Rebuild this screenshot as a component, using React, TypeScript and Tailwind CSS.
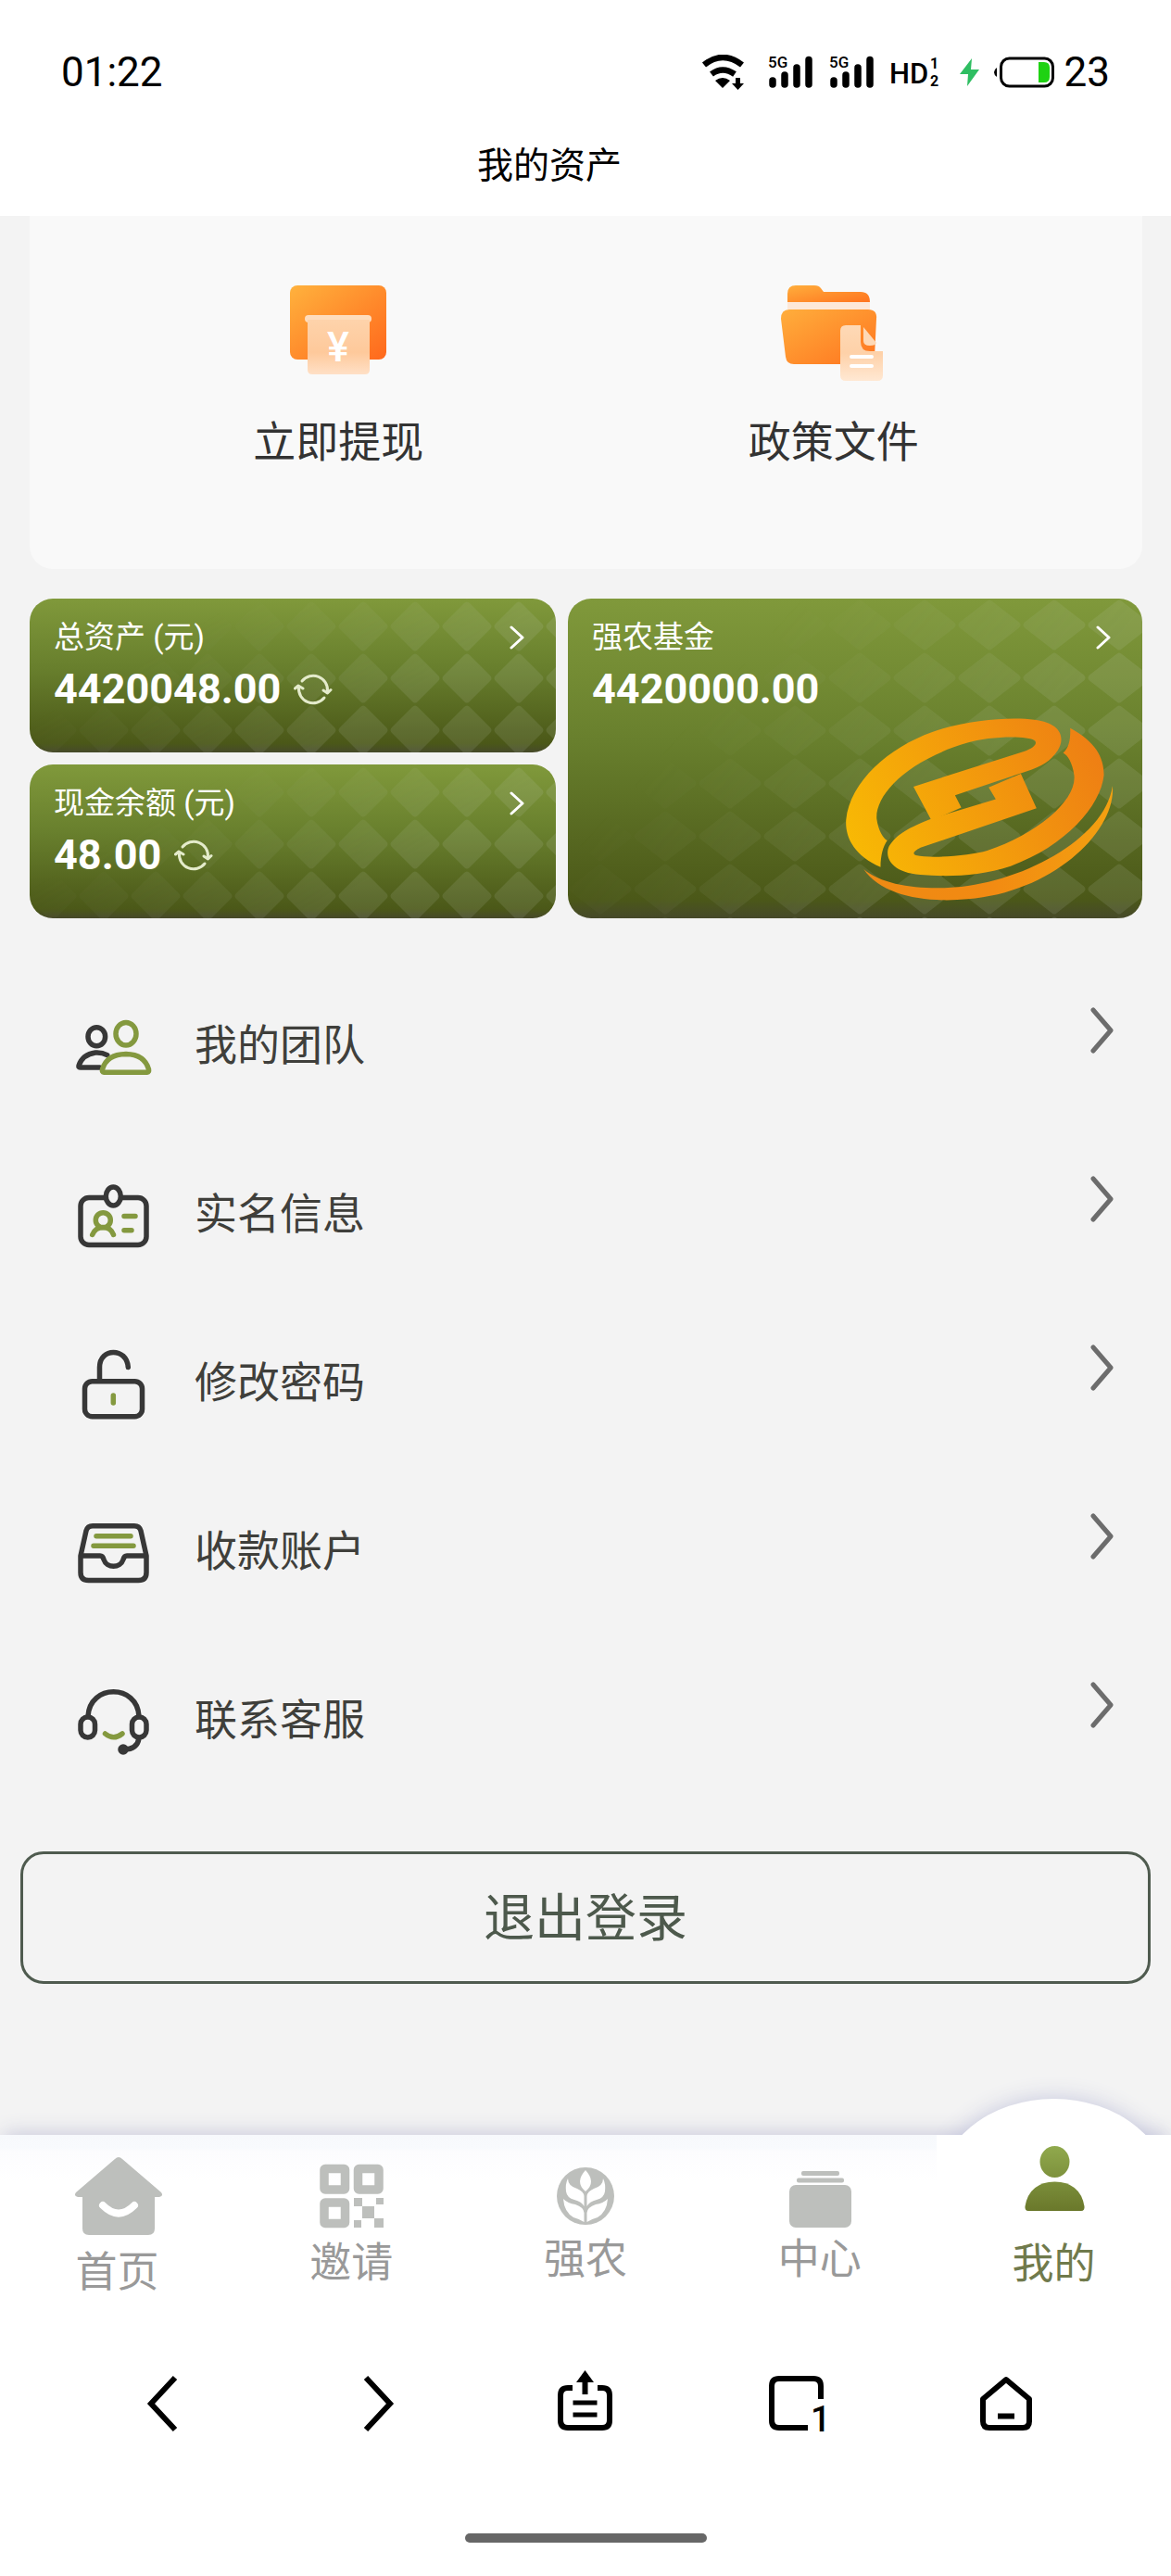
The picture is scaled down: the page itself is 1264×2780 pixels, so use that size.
import type { ReactNode } from "react";

const INK = "#373737";
const LEAF = "#84993f";
const MUTED = "#bdbfbc";

function SignalIcon() {
  return (
    <svg className="overflow-visible" width="47" height="36" viewBox="0 0 47 36">
      <text x="-1" y="13" fontSize="17" fontWeight="500">5G</text>
      <g stroke="#000" strokeWidth="7.500" strokeLinecap="round">
        <path d="M4 27v4M17 21v10M30 13v18M43 4.500v26.500" />
      </g>
    </svg>
  );
}

function StatusBar() {
  return (
    <div className="flex h-14 items-center justify-between px-[66px]">
      <span className="text-[44px] leading-[56px]">01:22</span>
      <div className="flex items-center">
        <svg width="47" height="38" viewBox="0 0 47 38">
          <path d="M3 11Q23 -5 44 11M11 21Q23 12 36 21" fill="none" stroke="#000" strokeWidth="6.500" />
          <path d="M15 28Q23 22 31 28L23 36Z" />
          <path d="M37 25h5v6h4l-6.500 7l-6.500 -7h4z" />
        </svg>
        <div className="ml-[26px]"><SignalIcon /></div>
        <div className="ml-[19px]"><SignalIcon /></div>
        <svg className="ml-[19px] overflow-visible" width="52" height="36" viewBox="0 0 52 36">
          <text x="-2" y="30" fontSize="31" fontWeight="500">HD</text>
          <text x="42" y="14" fontSize="16" fontWeight="700">1</text>
          <text x="42" y="33" fontSize="16" fontWeight="700">2</text>
        </svg>
        <svg className="ml-[22px]" width="21" height="30" viewBox="0 0 21 30">
          <path d="M13 0L0 17h9L8 30L21 12h-9z" fill="#2fbe62" />
        </svg>
        <svg className="ml-4" width="65" height="34" viewBox="0 0 65 34">
          <path d="M3 12v10Q0 20 0 17T3 12Z" />
          <rect x="7.500" y="2" width="56" height="30" rx="9" fill="none" stroke="#000" strokeWidth="3" />
          <path d="M48 6h6q6 0 6 6v10q0 6 -6 6h-6z" fill="#1fd212" />
        </svg>
        <span className="ml-[11px] text-[44px] leading-[56px]">23</span>
      </div>
    </div>
  );
}

function WithdrawIcon() {
  return (
    <svg width="128" height="112" viewBox="0 0 128 112">
      <defs>
        <linearGradient id="wd-box" x1="0" y1="0" x2="1" y2="1">
          <stop offset="0" stopColor="#ffb23d" />
          <stop offset="1" stopColor="#ff681c" />
        </linearGradient>
        <linearGradient id="wd-paper" x1="0" y1="0" x2="0" y2="1">
          <stop offset="0" stopColor="#fed3ab" />
          <stop offset="0.6" stopColor="#fec99b" />
          <stop offset="1" stopColor="#ffe0c6" />
        </linearGradient>
      </defs>
      <rect x="12" y="7" width="104" height="80" rx="8" fill="url(#wd-box)" />
      <rect x="28" y="39" width="72" height="8" rx="4" fill="#fedcbc" />
      <path d="M31 44h67v54q0 5 -5 5h-57q-5 0 -5 -5z" fill="url(#wd-paper)" />
      <text x="64" y="89" textAnchor="middle" fontSize="45" fontWeight="500" fill="#fff">¥</text>
    </svg>
  );
}

function PolicyIcon() {
  return (
    <svg width="128" height="112" viewBox="0 0 128 112">
      <defs>
        <linearGradient id="pl-box" x1="0" y1="0" x2="1" y2="1">
          <stop offset="0" stopColor="#ffae3c" />
          <stop offset="1" stopColor="#ff741f" />
        </linearGradient>
        <linearGradient id="pl-doc" x1="0" y1="0" x2="0" y2="1">
          <stop offset="0" stopColor="#fed9b6" />
          <stop offset="0.500" stopColor="#fed1a8" />
          <stop offset="1" stopColor="#ffe8d3" />
        </linearGradient>
      </defs>
      <path d="M14 25V16Q14 7 23 7H43Q48 7 50 10L53 14H93Q103 14 103 25Z" fill="url(#pl-box)" />
      <rect x="14" y="25" width="89" height="8" fill="#fde8d8" />
      <path d="M16 33H101Q111 33 110 43L108 84Q107 92 99 92H21Q13 92 12 84L7 43Q7 33 16 33Z" fill="url(#pl-box)" />
      <path d="M77 50H93V68Q93 78 103 78H117V104Q117 110 111 110H77Q71 110 71 104V56Q71 50 77 50Z" fill="url(#pl-doc)" />
      <path d="M96 52L110 69Q109 72 103 72Q96 72 96 67Z" fill="#fed9b6" />
      <path d="M83 84H105M83 94H105" stroke="#fff" strokeWidth="4" strokeLinecap="round" />
    </svg>
  );
}

function Action({ label, children }: { label: string; children: ReactNode }) {
  return (
    <a href="#" className="flex flex-col items-center gap-8">
      {children}
      <span className="text-[46px] leading-[64px] text-[#333]">{label}</span>
    </a>
  );
}

function Diamonds({ id, w, h, x, y }: { id: string; w: number; h: number; x: number; y: number }) {
  const d = `M${w / 2 - 3} 3Q${w / 2} 0 ${w / 2 + 3} 3L${w - 3} ${h / 2 - 3}Q${w} ${h / 2} ${w - 3} ${h / 2 + 3}L${w / 2 + 3} ${h - 3}Q${w / 2} ${h} ${w / 2 - 3} ${h - 3}L3 ${h / 2 + 3}Q0 ${h / 2} 3 ${h / 2 - 3}Z`;
  return (
    <svg className="absolute inset-0 h-full w-full" aria-hidden="true">
      <defs>
        <pattern id={`${id}-p`} x={x} y={y} width={w} height={h} patternUnits="userSpaceOnUse">
          <path d={d} fill="#c9cfc0" fillOpacity="0.13" />
        </pattern>
        <linearGradient id={`${id}-g`} x1="0.2" y1="0.4" x2="0.7" y2="0.65">
          <stop offset="0" stopColor="#000" />
          <stop offset="1" stopColor="#fff" />
        </linearGradient>
        <mask id={`${id}-m`} maskContentUnits="objectBoundingBox">
          <rect width="1" height="1" fill={`url(#${id}-g)`} />
        </mask>
      </defs>
      <rect width="100%" height="100%" fill={`url(#${id}-p)`} mask={`url(#${id}-m)`} />
    </svg>
  );
}

function RefreshIcon() {
  return (
    <svg width="42" height="36" viewBox="0 0 42 36" fill="none" stroke="#e4ebcb" strokeWidth="3" strokeLinecap="round" strokeLinejoin="round">
      <path d="M9 9A15.500 15.500 0 0 1 36.500 20" />
      <path d="M33 27A15.500 15.500 0 0 1 5.500 16" />
      <path d="M32 19L36.500 22L40 18.500" />
      <path d="M1.500 17L5 14L10 17" />
    </svg>
  );
}

function FundLogo() {
  return (
    <svg className="absolute right-[30px] bottom-[19px]" width="291" height="197" viewBox="737 435 688 592" preserveAspectRatio="none" aria-hidden="true">
      <defs>
        <linearGradient id="fund-gold" gradientUnits="userSpaceOnUse" x1="740" y1="820" x2="1400" y2="560">
          <stop offset="0" stopColor="#f8b904" />
          <stop offset="1" stopColor="#ee7e14" />
        </linearGradient>
        <linearGradient id="fund-edge" gradientUnits="userSpaceOnUse" x1="785" y1="0" x2="1420" y2="0">
          <stop offset="0" stopColor="#ee8a14" />
          <stop offset="0.5" stopColor="#f28a12" />
          <stop offset="1" stopColor="#f3a010" />
        </linearGradient>
      </defs>
      <g fill="url(#fund-gold)">
        <path d="M828 918C760 880 737 820 740 765C750 640 850 530 960 480C1050 440 1160 430 1220 440C1290 450 1300 500 1280 540C1262 575 1240 590 1200 608L1018 685L1034 725L958 767L912 657L1190 545C1225 530 1227 515 1222 508C1200 490 1100 495 1050 515C900 570 815 680 818 760C822 800 835 825 845 832C835 850 828 880 828 918Z" />
        <path d="M1312 467C1375 510 1398 560 1398 620C1390 720 1300 850 1160 915C1080 948 1000 950 930 943C850 935 838 880 850 850C870 810 900 790 960 760L1122 698L1104 660L1186 615L1226 727L930 855C910 868 910 875 918 880C960 892 1060 880 1100 865C1230 810 1330 700 1322 620C1318 580 1305 555 1294 548C1310 530 1313 500 1312 467Z" />
      </g>
      <path d="M785 925C830 975 920 990 1000 985C1180 975 1400 830 1420 655C1430 800 1270 1000 1050 1022C940 1035 830 1010 785 925Z" fill="url(#fund-edge)" />
    </svg>
  );
}

const CARD_BG = "bg-[linear-gradient(to_bottom,#80993b_0%,#687f2d_45%,#4b5818_94%,#46492a_100%)]";

type AssetCardProps = {
  label: string;
  amount: string;
  pattern: ReactNode;
  refresh?: boolean;
  className?: string;
  children?: ReactNode;
};

function AssetCard({ label, amount, pattern, refresh, className = "", children }: AssetCardProps) {
  return (
    <section className={`relative overflow-hidden rounded-[25px] pt-[18px] pr-[34px] pb-11 pl-[26px] text-white ${CARD_BG} ${className}`}>
      {pattern}
      <div className="relative flex items-center justify-between">
        <h2 className="text-[33px] leading-[48px]">{label}</h2>
        <a href="#" aria-label={label}>
          <svg width="16" height="26" viewBox="0 0 16 26" fill="none" stroke="#fff" strokeWidth="3" strokeLinecap="round" strokeLinejoin="round">
            <path d="M2 2L14 13L2 24" />
          </svg>
        </a>
      </div>
      <div className="relative mt-2 flex items-center gap-[14px]">
        <span className="text-[45px] leading-[48px] font-bold">{amount}</span>
        {refresh && (
          <button type="button" aria-label="刷新">
            <RefreshIcon />
          </button>
        )}
      </div>
      {children}
    </section>
  );
}

const MENU: { label: string; icon: ReactNode }[] = [
  {
    label: "我的团队",
    icon: (
      <>
        <g stroke={INK}>
          <ellipse cx="22.300" cy="27.700" rx="9.300" ry="10" />
          <path d="M33.700 47.700Q28 44.500 21 45Q7 47 3 59Q2.500 61 5 61H25.700" />
        </g>
        <g stroke={LEAF}>
          <ellipse cx="54" cy="24.700" rx="11" ry="12.300" />
          <path d="M30 66.300Q28 66.300 28.500 63Q33 47 54 46.500Q74 47 78.500 63Q79 66.300 77 66.300Z" />
        </g>
      </>
    ),
  },
  {
    label: "实名信息",
    icon: (
      <>
        <g stroke={INK}>
          <rect x="5" y="19.500" width="71" height="51" rx="9" />
          <ellipse cx="40.300" cy="18" rx="8" ry="10" fill="#f3f3f3" />
        </g>
        <g stroke={LEAF}>
          <circle cx="29.300" cy="43.700" r="8" />
          <path d="M17.700 59.500Q21 51.500 29.300 51.500T40.500 59.500M52 39.500H64M52 54.700H60" />
        </g>
      </>
    ),
  },
  {
    label: "修改密码",
    icon: (
      <>
        <g stroke={INK}>
          <rect x="9.500" y="35.700" width="62" height="38" rx="8" />
          <path d="M25.500 35V20.500C25.500 -1 55 -1 56.300 20.500" />
        </g>
        <path d="M40.300 51V59" stroke={LEAF} />
      </>
    ),
  },
  {
    label: "收款账户",
    icon: (
      <>
        <path
          d="M5 42L11 15Q12.500 9.700 18 9.700H63Q68.500 9.700 70 15L76 42V60Q76 68.500 67.500 68.500H13.500Q5 68.500 5 60ZM5 42H26Q29 42 30 46C33 55.500 48 55.500 51 46Q52 42 55 42H76"
          stroke={INK}
        />
        <path d="M22 20.700H59M19 31.300H62" stroke={LEAF} />
      </>
    ),
  },
  {
    label: "联系客服",
    icon: (
      <>
        <g stroke={INK}>
          <path d="M13 33C15 -2 66 -2 68 33M68 57Q66 69 52 69" />
          <rect x="5" y="34" width="15.500" height="22" rx="7.750" />
          <rect x="60.500" y="34" width="15.500" height="22" rx="7.750" />
          <circle cx="51" cy="69" r="3" fill={INK} />
        </g>
        <path d="M31.500 52Q40.500 59.500 50 52" stroke={LEAF} />
      </>
    ),
  },
];

function MenuRow({ label, icon }: { label: string; icon: ReactNode }) {
  return (
    <li>
      <a href="#" className="flex h-[182px] items-center pr-[31px] pl-[50px]">
        <svg className="mt-1.5" width="80" height="80" viewBox="0 0 80 80" fill="none" strokeWidth="5.500" strokeLinecap="round" strokeLinejoin="round" overflow="visible">
          {icon}
        </svg>
        <span className="ml-12 flex-1 text-[46px] leading-[64px] text-[#3f3f3b]">{label}</span>
        <svg className="mb-8" width="25" height="50" viewBox="0 0 25 50" fill="none" stroke="#6c6c6c" strokeWidth="5" strokeLinecap="round" strokeLinejoin="round">
          <path d="M3 3L22 25L3 47" />
        </svg>
      </a>
    </li>
  );
}

function NavItem({ label, className, active, children }: { label: string; className: string; active?: boolean; children: ReactNode }) {
  return (
    <li className={active ? "bg-white" : ""}>
      <a href="#" className={`flex flex-col items-center ${className}`}>
        {children}
        <span className={`text-[45px] leading-[64px] ${active ? "text-[#707a4c]" : "text-[#999]"}`}>{label}</span>
      </a>
    </li>
  );
}

function TabBar() {
  return (
    <nav className="relative shadow-[0_-6px_20px_-4px_#c9cadb]">
      {/* raised bump behind the active tab */}
      <div className="absolute -top-[39px] right-0 h-[206px] w-1/5 rounded-[50%] bg-white shadow-[0_0_24px_#c4c6dd]" />
      <ul className="relative grid h-[208px] grid-cols-5 bg-[linear-gradient(to_bottom,#f7f9fc_0px,#f8fafd_14px,#fcfcfe_18px,#ffffff_50px)]">
        <NavItem label="首页" className="gap-2 pt-[23px]">
          <svg width="100" height="86" viewBox="0 0 100 86">
            <path d="M48 3Q52 -1 56 3L98 39Q101 43 96 44H91V78Q91 85 84 85H20Q13 85 13 78V44H8Q3 43 6 39Z" fill={MUTED} />
            <path d="M35 53Q52 70 69 53" fill="none" stroke="#fff" strokeWidth="8" strokeLinecap="round" />
          </svg>
        </NavItem>
        <NavItem label="邀请" className="gap-1 pt-[31px]">
          <svg width="72" height="72" viewBox="0 0 72 72" fill={MUTED}>
            <g fill="none" stroke={MUTED} strokeWidth="9.500">
              <rect x="7" y="5.500" width="22.500" height="22.500" rx="1" />
              <rect x="43.500" y="5.500" width="22.500" height="22.500" rx="1" />
              <rect x="7" y="42" width="22.500" height="22.500" rx="1" />
            </g>
            <rect x="39" y="37" width="9" height="9" />
            <rect x="63" y="37" width="8" height="7" />
            <rect x="48" y="46" width="13" height="13" />
            <rect x="39" y="61" width="8" height="8" />
            <rect x="61" y="59" width="10" height="10" />
          </svg>
        </NavItem>
        <NavItem label="强农" className="pt-[31px]">
          <svg width="72" height="72" viewBox="0 0 72 72">
            <circle cx="36" cy="35" r="31" fill={MUTED} />
            <g fill="#fff">
              <path d="M36 7Q24 20 36 30Q48 20 36 7Z" />
              <path d="M17 16Q17 24 27 27Q34 30 34.500 35V46Q32 41 24 39Q16 37 15 30Q14 22 17 16Z" />
              <path d="M55 16Q55 24 45 27Q38 30 37.500 35V46Q40 41 48 39Q56 37 57 30Q58 22 55 16Z" />
              <path d="M12 38Q17 43 25 44Q34 47 34.500 53V63Q30 60 23 58Q13 52 12 38Z" />
              <path d="M60 38Q55 43 47 44Q38 47 37.500 53V63Q42 60 49 58Q59 52 60 38Z" />
            </g>
          </svg>
        </NavItem>
        <NavItem label="中心" className="pt-[31px]">
          <svg width="72" height="72" viewBox="0 0 72 72" fill={MUTED}>
            <rect x="16" y="8" width="41" height="5" rx="2" />
            <rect x="11" y="15.500" width="51" height="5" rx="2" />
            <rect x="3" y="23" width="67" height="46" rx="7" />
          </svg>
        </NavItem>
        <NavItem label="我的" className="gap-6 pt-3" active>
          <svg width="72" height="72" viewBox="0 0 72 72">
            <defs>
              <linearGradient id="me" gradientUnits="userSpaceOnUse" x1="0" y1="0" x2="0" y2="70">
                <stop offset="0" stopColor="#90a94d" />
                <stop offset="1" stopColor="#6a782b" />
              </linearGradient>
            </defs>
            <g fill="url(#me)">
              <ellipse cx="36.500" cy="17" rx="16" ry="17" />
              <path d="M8 70Q4 70 4.500 65Q9 39 36.500 38.500Q64 39 68.500 65Q69 70 65 70Z" />
            </g>
          </svg>
        </NavItem>
      </ul>
    </nav>
  );
}

function BrowserButton({ label, children }: { label: string; children: ReactNode }) {
  return (
    <button type="button" aria-label={label}>
      <svg width="96" height="88" viewBox="0 -8 96 88" fill="none" stroke="#000" strokeWidth="6" strokeLinejoin="round">
        {children}
      </svg>
    </button>
  );
}

function BrowserBar() {
  return (
    <footer className="relative bg-white pb-9">
      <div className="flex h-[164px] items-center justify-between pr-[131px] pl-[127px]">
        <BrowserButton label="后退">
          <path d="M62 8L36 36L62 64" strokeLinejoin="miter" />
        </BrowserButton>
        <BrowserButton label="前进">
          <path d="M40 8L66 36L40 64" strokeLinejoin="miter" />
        </BrowserButton>
        <BrowserButton label="分享">
          <path d="M36 19H31Q23 19 23 27V54Q23 62 31 62H68Q76 62 76 54V27Q76 19 68 19H63" />
          <path d="M49.500 26V8" />
          <path d="M49.500 0L59 13H40Z" fill="#000" stroke="none" />
          <path d="M36.500 35H62.500M36.500 48H62.500" strokeWidth="5" />
        </BrowserButton>
        <BrowserButton label="标签页">
          <path d="M76 31V17Q76 9 68 9H31Q23 9 23 17V54Q23 62 31 62H62" />
          <text x="65" y="66" fontSize="38" fontWeight="500" fill="#000" stroke="none">1</text>
        </BrowserButton>
        <BrowserButton label="主页">
          <path d="M49 10L74 31V55Q74 62 67 62H31Q24 62 24 55V31Z" />
          <path d="M40 49.500H58" />
        </BrowserButton>
      </div>
      <div className="mx-auto mt-[58px] h-[10px] w-[261px] rounded-full bg-[#676767]" />
    </footer>
  );
}

export default function App() {
  return (
    <div className="flow-root min-h-screen bg-[#f3f3f3] font-[Roboto,'Noto_Sans_CJK_SC',sans-serif] text-black">
      <header className="bg-white pt-[50px] pb-6">
        <StatusBar />
        <h1 className="mt-[43px] pr-[78px] text-center text-[39px] leading-[60px]">我的资产</h1>
      </header>

      <main className="pb-[163px]">
        <div className="pr-[31px] pl-8">
          <section className="grid grid-cols-2 rounded-b-[25px] bg-[#f9f9f9] px-[66px] pt-[68px] pb-[105px]">
            <Action label="立即提现">
              <WithdrawIcon />
            </Action>
            <Action label="政策文件">
              <PolicyIcon />
            </Action>
          </section>

          <div className="mt-8 grid grid-cols-[568fr_620fr] gap-[13px]">
            <AssetCard label="总资产 (元)" amount="4420048.00" refresh pattern={<Diamonds id="total" w={56} h={56} x={52} y={2} />} />
            <AssetCard
              label="强农基金"
              amount="4420000.00"
              className="row-span-2"
              pattern={<Diamonds id="fund" w={70} h={57} x={0} y={0} />}
            >
              <FundLogo />
            </AssetCard>
            <AssetCard label="现金余额 (元)" amount="48.00" refresh pattern={<Diamonds id="cash" w={56} h={56} x={52} y={2} />} />
          </div>

          <ul className="mt-[46px]">
            {MENU.map((item) => (
              <MenuRow key={item.label} label={item.label} icon={item.icon} />
            ))}
          </ul>
        </div>

        <div className="mt-[51px] px-[22px]">
          <button type="button" className="block h-[143px] w-full rounded-[25px] border-[3px] border-[#4f5b4f] text-[55px] leading-[72px] text-[#4d594c]">
            退出登录
          </button>
        </div>
      </main>

      <TabBar />
      <BrowserBar />
    </div>
  );
}
